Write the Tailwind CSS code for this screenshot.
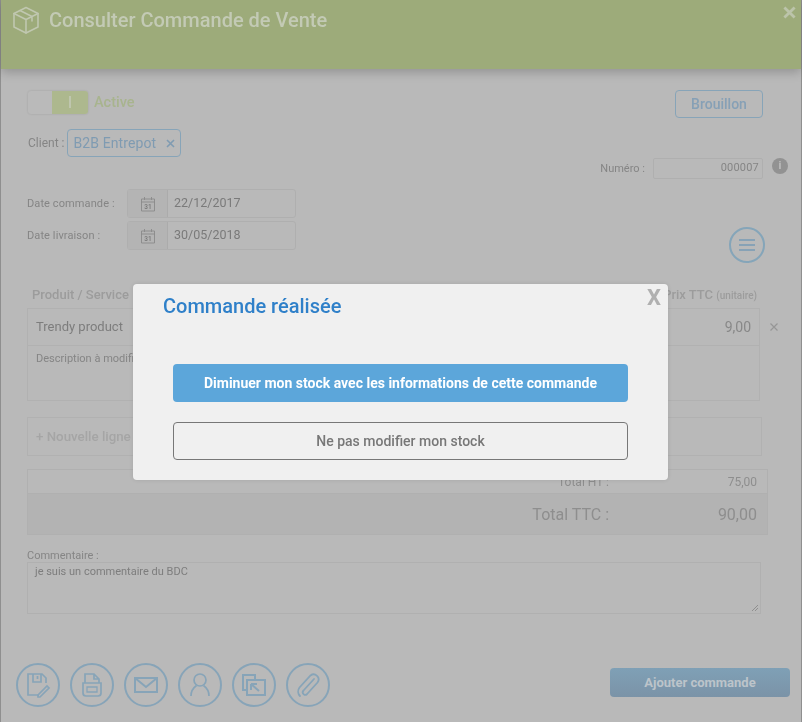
<!DOCTYPE html>
<html lang="fr">
<head>
<meta charset="utf-8">
<script src="https://cdn.jsdelivr.net/npm/@tailwindcss/browser@4"></script>
</head>
<body class="m-0 bg-[#b9b9b9] font-['Roboto',sans-serif]">
<div class="relative h-[722px] w-[802px] overflow-hidden bg-[#b9b9b9]">
  <div class="flex h-full flex-col border-x border-x-[#8f8f8f] blur-[0.6px]">
    <header class="flex h-[69px] shrink-0 items-start justify-between bg-[#9dab7a] pl-[11px] pr-[5px] pt-[6px] shadow-[0_3px_10px_rgba(0,0,0,0.22)]">
      <div class="flex items-center gap-[9px]">
        <svg class="h-[28px] w-[28px]" viewBox="0 0 28 28" fill="none" stroke="#c0c7b0" stroke-width="1.6" stroke-linejoin="round" stroke-linecap="round">
          <path d="M14 1.500 26 7.500V21L14 27 2 21V7.500Z"/><path d="M2 7.500 14 13.500 26 7.500M14 13.500V27M8 4.500 20 10.500V15"/>
        </svg>
        <h1 class="text-[20px] font-medium leading-[28px] text-[#c3cab5]">Consulter Commande de Vente</h1>
      </div>
      <svg class="h-[13px] w-[13px]" viewBox="0 0 14 14" stroke="#bcc4aa" stroke-width="3"><path d="M1.500 1.500 12.500 12.500M12.500 1.500 1.500 12.500"/></svg>
    </header>

    <main class="flex flex-1 flex-col pl-[26px] pr-[38px]">
      <section class="flex justify-between pt-[21px]">
        <div class="w-[270px]">
          <div class="flex h-[24px] items-center gap-[6px] pl-[1px]">
            <div class="flex h-[23px] w-[60px] rounded-[3px] bg-[#bababa] shadow-[0_0_2px_rgba(0,0,0,0.15)]">
              <div class="w-[24px]"></div>
              <div class="flex w-[36px] items-center justify-center rounded-r-[3px] bg-[#adb88e]"><span class="h-[12px] w-[2px] bg-[#bfc6ae]"></span></div>
            </div>
            <span class="pt-[1px] text-[14.500px] font-medium text-[#a8b48e]">Active</span>
          </div>
          <div class="mt-[15px] flex h-[28px] items-center gap-[3px] pl-[1px]">
            <span class="text-[12px] text-[#858585]">Client :</span>
            <div class="flex h-[28px] items-center gap-[10px] rounded-[4px] border border-[#87a4b8] pl-[5px] pr-[5px] text-[14px] tracking-[0.1px] text-[#7f9bb2]">
              <span>B2B Entrepot</span>
              <svg class="h-[9px] w-[9px]" viewBox="0 0 9 9" stroke="#7f9bb2" stroke-width="1.6"><path d="M1 1 8 8M8 1 1 8"/></svg>
            </div>
          </div>
          <div class="mt-[32px] flex h-[29px] items-center">
            <span class="w-[100px] pt-[1px] text-[11px] tracking-[0.1px] text-[#858585]">Date commande :</span>
            <div class="flex h-[29px] w-[169px] rounded-[3px] border border-[#afafaf]">
              <div class="flex w-[40px] items-center justify-center border-r border-[#ababab] bg-[#b4b4b4]">
                <svg class="h-[16px] w-[16px]" viewBox="0 0 16 16" fill="none" stroke="#8a8a8a" stroke-width="0.9"><path d="M1.500 3h13v12h-13zM1.500 6h13M4.500 1v3M11.500 1v3"/><text x="8" y="13.300" font-size="6.500" font-weight="500" text-anchor="middle" fill="#777" stroke="none">31</text></svg>
              </div>
              <div class="flex flex-1 items-center pl-[6px] text-[12.500px] text-[#7a7a7a]">22/12/2017</div>
            </div>
          </div>
          <div class="mt-[3px] flex h-[29px] items-center">
            <span class="w-[100px] pt-[1px] text-[11px] tracking-[0.1px] text-[#858585]">Date livraison :</span>
            <div class="flex h-[29px] w-[169px] rounded-[3px] border border-[#afafaf]">
              <div class="flex w-[40px] items-center justify-center border-r border-[#ababab] bg-[#b4b4b4]">
                <svg class="h-[16px] w-[16px]" viewBox="0 0 16 16" fill="none" stroke="#8a8a8a" stroke-width="0.9"><path d="M1.500 3h13v12h-13zM1.500 6h13M4.500 1v3M11.500 1v3"/><text x="8" y="13.300" font-size="6.500" font-weight="500" text-anchor="middle" fill="#777" stroke="none">31</text></svg>
              </div>
              <div class="flex flex-1 items-center pl-[6px] text-[12.500px] text-[#7a7a7a]">30/05/2018</div>
            </div>
          </div>
        </div>
        <div class="relative flex w-[200px] flex-col items-end">
          <button class="flex h-[28px] w-[88px] items-center justify-center rounded-[4px] border border-[#87a4b8] text-[14px] font-medium text-[#86a0b6]">Brouillon</button>
          <div class="relative mt-[40px] flex h-[21px] items-center gap-[8px]">
            <span class="pt-[1px] text-[11px] text-[#858585]">Numéro :</span>
            <div class="flex h-[21px] w-[110px] items-center justify-end rounded-[2px] border border-[#afafaf] pr-[3px] text-[11px] tracking-[0.2px] text-[#858585]">000007</div>
            <span class="absolute left-[calc(100%+9px)] top-[0px] flex h-[16px] w-[16px] items-center justify-center rounded-full bg-[#929292] text-[11px] font-bold text-[#bdbdbd]">i</span>
          </div>
          <div class="mr-[-2px] mt-[48px] flex h-[36px] w-[36px] flex-col items-center justify-center gap-[3px] rounded-full border-2 border-[#85a5b9]">
            <span class="h-[2px] w-[16px] bg-[#87a2b6]"></span><span class="h-[2px] w-[16px] bg-[#87a2b6]"></span><span class="h-[2px] w-[16px] bg-[#87a2b6]"></span>
          </div>
        </div>
      </section>

      <section class="mt-[24px]">
        <div class="flex h-[21px] items-start justify-between pl-[5px] pr-[6px] text-[13px] font-medium leading-[15px] text-[#9c9c9c]">
          <span>Produit / Service</span>
          <span>Prix TTC <span class="text-[10px]">(unitaire)</span></span>
        </div>
        <div class="relative flex h-[38px] w-[733px] items-center justify-between border border-[#b1b1b1] pl-[8px] pr-[8px] text-[13px] text-[#7d7d7d]">
          <span>Trendy product</span>
          <span class="text-[14px] text-[#888]">9,00</span>
          <svg class="absolute left-[calc(100%+11px)] top-[14px] h-[8px] w-[8px]" viewBox="0 0 8 8" stroke="#969696" stroke-width="1.2"><path d="M.5.5 7.500 7.500M7.500.5.5 7.500"/></svg>
        </div>
        <div class="h-[55px] w-[733px] border-x border-b border-[#b1b1b1] pl-[8px] pt-[5px] text-[11px] text-[#858585]">Description à modifier</div>
      </section>

      <div class="mt-[16px] flex h-[39px] w-[735px] items-center border border-[#b1b1b1] pl-[8px] text-[13.300px] font-medium text-[#a5a5a5]">+ Nouvelle ligne</div>

      <section class="mt-[13px] w-[741px] border border-[#b0b0b0] text-[#8e8e8e]">
        <div class="flex h-[23px] items-center justify-end pr-[10px] text-[12px]">
          <span>Total HT :</span><span class="w-[148px] text-right">75,00</span>
        </div>
        <div class="flex h-[41px] items-center justify-end border-t border-[#b0b0b0] bg-[#b3b3b3] pr-[10px] pt-[1px] text-[16px]">
          <span>Total TTC :</span><span class="w-[148px] text-right">90,00</span>
        </div>
      </section>

      <label class="mt-[14px] h-[13px] text-[11px] leading-[13px] text-[#858585]">Commentaire :</label>
      <div class="relative h-[52px] w-[734px] border border-[#b0b0b0] pl-[7px] pt-[1px] text-[11px] text-[#7d7d7d]">
        je suis un commentaire du BDC
        <svg class="absolute bottom-[1px] right-[1px] h-[8px] w-[8px]" viewBox="0 0 8 8" stroke="#8f8f8f"><path d="M1 7 7 1M4 7 7 4"/></svg>
      </div>

      <footer class="-ml-[11px] -mr-[27px] mt-[49px] flex items-start justify-between">
        <div class="flex gap-[10px]">
          <div class="flex h-[44px] w-[44px] items-center justify-center rounded-full border-2 border-[#87a4b8]">
            <svg class="h-[26px] w-[26px]" viewBox="0 0 26 26" fill="none" stroke="#87a4b8" stroke-width="1.700"><path d="M14 23H3V2h14l4 4v5"/><path d="M8 2v8h8V2M12.500 4v3M13 23l9-9 2 2-9 9h-2z"/></svg>
          </div>
          <div class="flex h-[44px] w-[44px] items-center justify-center rounded-full border-2 border-[#87a4b8]">
            <svg class="h-[26px] w-[26px]" viewBox="0 0 26 26" fill="none" stroke="#87a4b8" stroke-width="1.700"><path d="M6 11V2h9l5 5v4M15 2v5h5M4 11h18v10a3 3 0 0 1-3 3H7a3 3 0 0 1-3-3z"/><path d="M8 15h10v5H8z" stroke-width="1.300"/></svg>
          </div>
          <div class="flex h-[44px] w-[44px] items-center justify-center rounded-full border-2 border-[#87a4b8]">
            <svg class="h-[26px] w-[26px]" viewBox="0 0 26 26" fill="none" stroke="#87a4b8" stroke-width="2"><path d="M2 6h22v14H2zM2 6l11 9 11-9"/></svg>
          </div>
          <div class="flex h-[44px] w-[44px] items-center justify-center rounded-full border-2 border-[#87a4b8]">
            <svg class="h-[26px] w-[26px]" viewBox="0 0 26 26" fill="none" stroke="#87a4b8" stroke-width="1.700"><circle cx="13" cy="8" r="6"/><path d="M4 24c0-5 2-8 5.500-10.500M22 24c0-5-2-8-5.500-10.500"/></svg>
          </div>
          <div class="flex h-[44px] w-[44px] items-center justify-center rounded-full border-2 border-[#87a4b8]">
            <svg class="h-[26px] w-[26px]" viewBox="0 0 26 26" fill="none" stroke="#87a4b8" stroke-width="2"><path d="M14 8V3H2v15h4"/><path d="M6 8h18v15H6zM10 12l8 7M10 12h6M10 12v6"/></svg>
          </div>
          <div class="flex h-[44px] w-[44px] items-center justify-center rounded-full border-2 border-[#87a4b8]">
            <svg class="h-[28px] w-[28px]" viewBox="0 0 28 28" fill="none" stroke="#87a4b8" stroke-width="1.800" stroke-linecap="round"><path d="M20 8 9.500 19.500a2.500 2.500 0 0 0 3.600 3.500L23.500 11.500a5 5 0 0 0-7-7L5.500 16.500a6.500 6.500 0 0 0 .5 8.500"/></svg>
          </div>
        </div>
        <button class="mt-[5px] h-[29px] w-[180px] rounded-[4px] bg-linear-to-b from-[#7fa0b6] to-[#7b93a7] text-[13px] font-bold text-[#bcc4ca]">Ajouter commande</button>
      </footer>
    </main>
  </div>

  <div class="absolute left-[133px] top-[284px] h-[196px] w-[535px] rounded-[4px] bg-[#f0f0f0] shadow-[0_0_4px_rgba(0,0,0,0.1)]">
    <div class="flex items-start justify-between pl-[30px] pr-[7px]">
      <h2 class="mt-[9px] text-[20px] font-medium leading-[26px] text-[#2f80c9]">Commande réalisée</h2>
      <span class="mt-[2px] text-[22px] font-bold leading-[24px] text-[#b0b0b0]">X</span>
    </div>
    <div class="mt-[45px] flex flex-col gap-[20px] px-[40px]">
      <button class="h-[38px] rounded-[4px] bg-[#5ca6da] text-[14px] font-bold text-white">Diminuer mon stock avec les informations de cette commande</button>
      <button class="h-[38px] rounded-[4px] border border-[#777] text-[14px] font-medium text-[#777]">Ne pas modifier mon stock</button>
    </div>
  </div>
</div>
</body>
</html>
